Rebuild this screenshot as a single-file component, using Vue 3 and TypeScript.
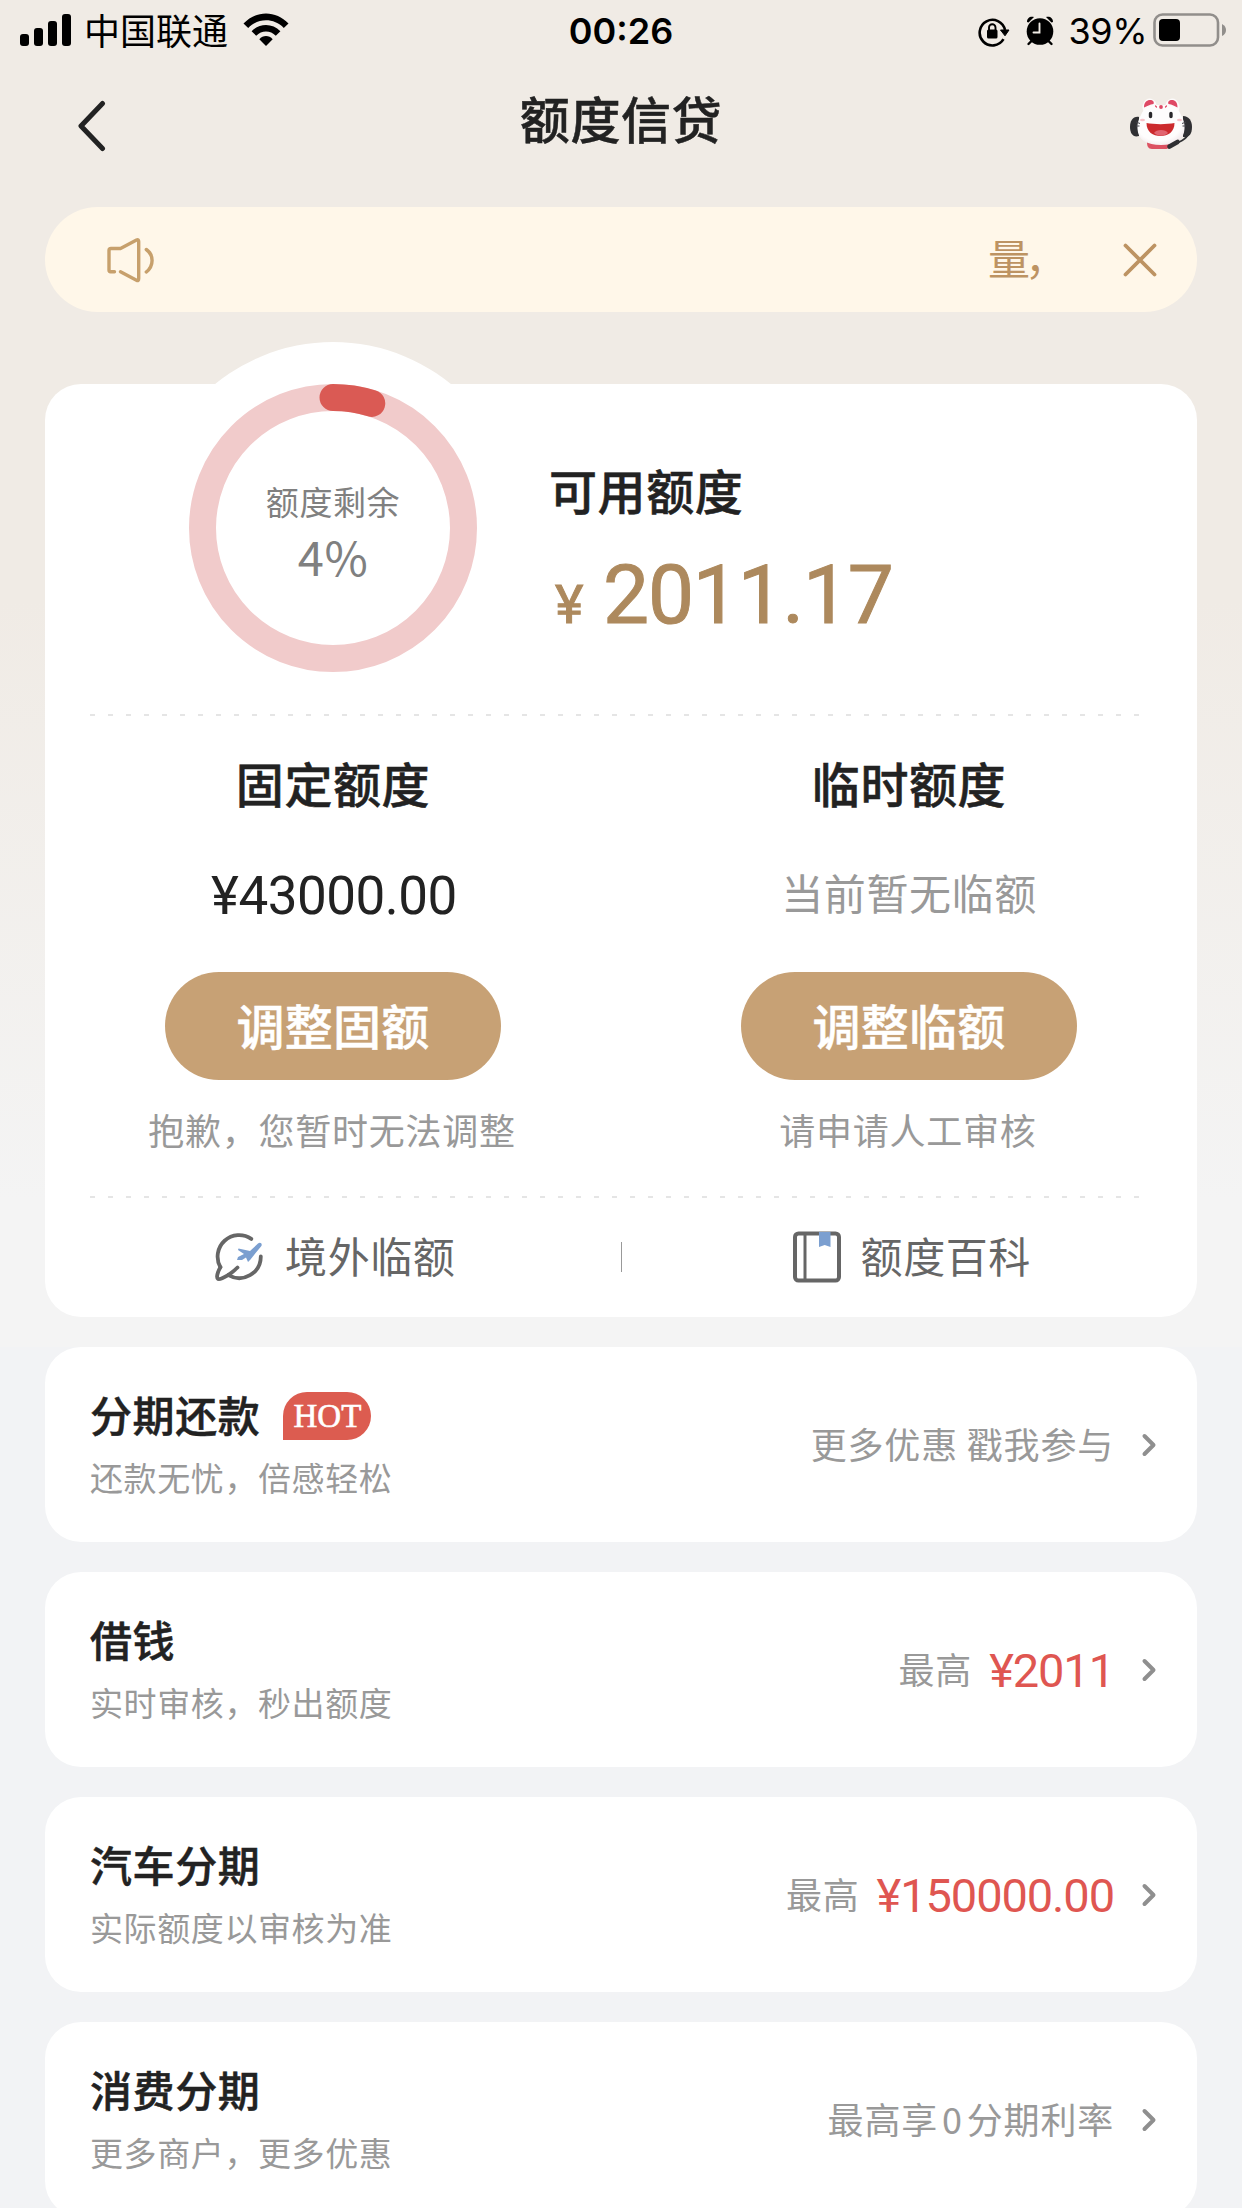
<script setup lang="ts">
interface QuotaColumn {
  title: string
  value: string
  isMoney: boolean
  action: string
  note: string
}

interface Product {
  title: string
  desc: string
  hot?: boolean
  hint: string[]
  amount?: string
}

const remainPercent = 4.8
const ringRadius = 130.5
const ringLength = 2 * Math.PI * ringRadius
const ringDash = `${(ringLength * remainPercent) / 100} ${ringLength}`

const columns: QuotaColumn[] = [
  { title: '固定额度', value: '¥43000.00', isMoney: true, action: '调整固额', note: '抱歉，您暂时无法调整' },
  { title: '临时额度', value: '当前暂无临额', isMoney: false, action: '调整临额', note: '请申请人工审核' },
]

// The middle part of a three-part hint is a figure, set with air on both sides.
const products: Product[] = [
  { title: '分期还款', desc: '还款无忧，倍感轻松', hot: true, hint: ['更多优惠 戳我参与'] },
  { title: '借钱', desc: '实时审核，秒出额度', hint: ['最高'], amount: '¥2011' },
  { title: '汽车分期', desc: '实际额度以审核为准', hint: ['最高'], amount: '¥150000.00' },
  { title: '消费分期', desc: '更多商户，更多优惠', hint: ['最高享', '0', '分期利率'] },
]
</script>

<template>
  <div class="page" lang="zh-CN">
    <header class="status">
      <div class="status-left">
        <svg class="signal" width="51" height="32" viewBox="0 0 51 32">
          <rect x="0" y="20" width="9" height="12" rx="3" />
          <rect x="14" y="14" width="9" height="18" rx="3" />
          <rect x="28" y="7" width="9" height="25" rx="3" />
          <rect x="42" y="0" width="9" height="32" rx="3" />
        </svg>
        <span class="carrier">中国联通</span>
        <svg class="wifi" width="46" height="34" viewBox="0 0 46 34">
          <path d="M0.5 10.5C13 -3 33 -3 45.5 10.5L40.8 15C31 4.800 15 4.800 5.200 15Z" />
          <path d="M8.600 18.300C16.500 9.800 29.500 9.800 37.400 18.300L32.800 22.800C27.500 17 18.500 17 13.200 22.800Z" />
          <path d="M16.300 26.300C20 22 26 22 29.700 26.300L23 33Z" />
        </svg>
      </div>
      <span class="clock">00:26</span>
      <div class="status-right">
        <svg class="lock" width="32" height="30" viewBox="0 0 32 30">
          <path d="M25.500 22.200A12.800 12.800 0 1 1 27 13" fill="none" stroke="#000" stroke-width="2.600" />
          <path d="M22.500 13H31L27 18.800Z" stroke="#000" stroke-linejoin="round" />
          <rect x="9" y="12.500" width="10.500" height="9" rx="1.500" />
          <path d="M11 13V10.500A3.250 3.250 0 0 1 17.500 10.500V13" fill="none" stroke="#000" stroke-width="1.900" />
        </svg>
        <svg class="alarm" width="28" height="30" viewBox="0 0 28 30">
          <circle cx="14" cy="15.500" r="13.300" />
          <path d="M1 6C1 2 4 0 8 1L2.500 6.500ZM27 6C27 2 24 0 20 1L25.500 6.500Z" />
          <path d="M2.500 28L6 24.500M25.500 28L22 24.500" stroke="#000" stroke-width="2.400" stroke-linecap="round" />
          <path d="M13.500 7.500V16.500H7.500" fill="none" stroke="#f0ebe5" stroke-width="1.900" stroke-linecap="round" />
        </svg>
        <span class="battery-text">39%</span>
        <svg class="battery" width="74" height="34" viewBox="0 0 74 34">
          <rect x="1.500" y="1.500" width="63.500" height="31" rx="8" fill="none" stroke="#918e8b" stroke-width="2.600" />
          <rect x="6" y="6" width="21" height="22" rx="4" />
          <path d="M69 11Q73 13 73 17T69 23Z" fill="#918e8b" />
        </svg>
      </div>
    </header>

    <nav class="nav">
      <svg class="back" width="30" height="52" viewBox="0 0 30 52">
        <path d="M25.500 3.500L4 26L25.500 48.500" fill="none" stroke="#222" stroke-width="5" stroke-linecap="round" stroke-linejoin="round" />
      </svg>
      <h1 class="nav-title">额度信贷</h1>
      <svg class="mascot" width="64" height="52" viewBox="0 0 64 52">
        <defs>
          <radialGradient id="face" cx="0.45" cy="0.4" r="0.7">
            <stop offset="0.7" stop-color="#fefdfd" />
            <stop offset="1" stop-color="#eee2e5" />
          </radialGradient>
        </defs>
        <path d="M10 19C4 18 1 23 1 29C1 35 4 40 10 38Z" fill="#303033" />
        <path d="M54 18C60 18 63 23 63 29C63 36 60 40 54 39Z" fill="#303033" />
        <path d="M18 44H42C42 49 40 51 36 51H23C19 51 18 48 18 44Z" fill="#dc5262" />
        <ellipse cx="20.500" cy="8.500" rx="7" ry="8" transform="rotate(12 20.500 8.500)" fill="#fdfafa" />
        <ellipse cx="43.500" cy="8.500" rx="7" ry="8" transform="rotate(-12 43.500 8.500)" fill="#fdfafa" />
        <path d="M32 7C42 7 49 9 52 17C55 22 56 27 55.500 31C55 42 46 47 32 47C18 47 9 42 8.500 31C8 27 9 22 12 17C15 9 22 7 32 7Z" fill="url(#face)" />
        <path d="M15 9.500C15 4 18 2 21 2C24 2 25.500 4 24.500 6C21 6.500 18 8 15 9.500ZM48.500 9.500C48.500 4 46 2 43 2C40 2 38.500 4 39.500 6C43 6.500 46 8 48.500 9.500Z" fill="#df4965" />
        <circle cx="32" cy="9" r="1.900" fill="#df4965" />
        <path d="M26.500 8L27.500 9M37.500 8L36.500 9" stroke="#df4965" stroke-width="1.200" stroke-linecap="round" />
        <path d="M21.500 15.500V18.500M42 15.500V18.500" stroke="#29282b" stroke-width="3.400" stroke-linecap="round" />
        <path d="M17.500 25C25 26.500 38 26.500 45.500 25C45.500 34 39 38 31.500 38C24 38 17.500 34 17.500 25Z" fill="#cc2a2d" />
        <path d="M25 35C27 31 37 31 39 35C35 38.500 29 38.500 25 35Z" fill="#e16470" />
        <ellipse cx="13.500" cy="22" rx="2.500" ry="1.200" fill="#f7c3c9" />
        <ellipse cx="50.500" cy="22" rx="2.500" ry="1.200" fill="#f7c3c9" />
        <path d="M7 24L11 25.500M7 28H10.500M57 24L53 25.500M57 28H53.500" stroke="#44434a" stroke-width="1" />
        <path d="M59 37C56 42 52 43 48 45" fill="none" stroke="#303033" stroke-width="1.500" />
        <path d="M40.500 48.500L48.500 44" stroke="#303033" stroke-width="4.600" stroke-linecap="round" />
      </svg>
    </nav>

    <section class="notice">
      <svg class="speaker" width="48" height="46" viewBox="0 0 48 46" fill="none" stroke="#c7a06c" stroke-width="3.400" stroke-linecap="round" stroke-linejoin="round">
        <path d="M7.500 34.700H3.500Q2 34.700 2 33V13.500Q2 11.500 4 11.500H13.500L29.500 3Q31.700 2 31.700 4.500V41.500Q31.700 44.500 29.500 43.300L13.500 34.700" />
        <path d="M39.300 12.500C47 18 47 28.500 39.300 35" />
      </svg>
      <div class="marquee"><span>量</span>，</div>
      <svg class="close" width="34" height="34" viewBox="0 0 34 34">
        <path d="M2.500 2.500L31.500 31.500M31.500 2.500L2.500 31.500" stroke="#bd9362" stroke-width="3.800" stroke-linecap="round" />
      </svg>
    </section>

    <section class="quota">
      <div class="overview">
        <div class="ring">
          <svg class="ring-svg" width="288" height="288" viewBox="0 0 288 288" fill="none" stroke-width="27">
            <circle cx="144" cy="144" :r="ringRadius" stroke="#f1cbcb" />
            <circle cx="144" cy="144" :r="ringRadius" stroke="#da5a54" stroke-linecap="round" :stroke-dasharray="ringDash" transform="rotate(-90 144 144)" />
          </svg>
          <div class="ring-text">
            <span class="ring-label">额度剩余</span>
            <span class="ring-value">4%</span>
          </div>
        </div>
        <div class="available">
          <h2 class="heading">可用额度</h2>
          <div class="balance"><span class="yen">¥</span><span class="sum">2011.17</span></div>
        </div>
      </div>

      <div class="dashes"></div>

      <div class="columns">
        <div v-for="c in columns" :key="c.title" class="column">
          <h2 class="heading">{{ c.title }}</h2>
          <div :class="c.isMoney ? 'money' : 'empty'">{{ c.value }}</div>
          <button class="action">{{ c.action }}</button>
          <div class="note">{{ c.note }}</div>
        </div>
      </div>

      <div class="dashes"></div>

      <div class="links">
        <div class="link">
          <svg width="50" height="50" viewBox="0 0 50 50" fill="none" stroke="#666" stroke-width="3.800" stroke-linecap="round">
            <path d="M36.300 6.900A21.500 21.500 0 0 0 5.400 35.200" />
            <path d="M45.800 24.500A21.500 21.500 0 0 1 13.500 43.100" />
            <path d="M5.400 35.200C2.500 40 1 46 3 47C7 48 17 41 22.500 35.500" />
            <path d="M23.500 16.500L35 19L43 11.500C45.500 9.500 48 12 46 14.500L41 20.500L35.500 27.500L33 30L31 25.500L27 28L22 28L23 25L29 22L23 18Z" fill="#7b9fd0" stroke="none" />
          </svg>
          <span>境外临额</span>
        </div>
        <i class="bar"></i>
        <div class="link">
          <svg width="48" height="52" viewBox="0 0 48 52" fill="none">
            <rect x="2" y="2.500" width="44" height="47" rx="3.500" stroke="#666" stroke-width="4" />
            <path d="M12 2.500V49" stroke="#666" stroke-width="3" />
            <path d="M26 1H37.500V16L31.700 14L26 16Z" fill="#7b9fd0" />
          </svg>
          <span>额度百科</span>
        </div>
      </div>
    </section>

    <main class="list">
      <article v-for="p in products" :key="p.title" class="item">
        <div class="item-main">
          <div class="item-title">
            <h3>{{ p.title }}</h3>
            <span v-if="p.hot" class="hot">HOT</span>
          </div>
          <p class="item-desc">{{ p.desc }}</p>
        </div>
        <span class="item-hint"><span v-for="(part, i) in p.hint" :key="i" :class="{ figure: i === 1 }">{{ part }}</span></span>
        <span v-if="p.amount" class="item-amount">{{ p.amount }}</span>
        <svg class="chevron" width="16" height="24" viewBox="0 0 16 24">
          <path d="M3.500 3L12.500 12L3.500 21" fill="none" stroke="#8f8f8f" stroke-width="4" stroke-linecap="round" stroke-linejoin="round" />
        </svg>
      </article>
    </main>
  </div>
</template>

<style>
body {
  margin: 0;
}
</style>

<style scoped>
.page {
  width: 1242px;
  height: 2208px;
  overflow: hidden;
  box-sizing: border-box;
  background: linear-gradient(#f0ebe5 0, #f0ebe5 600px, #f4f4f4 1200px, #f4f4f4 1347px, #f2f3f5 1347px);
  font-family: "Noto Sans CJK SC", sans-serif;
  color: #222;
  letter-spacing: 0.6px;
}
h1, h2, h3, p {
  margin: 0;
  font-weight: 500;
}
h1, h2, h3, .action {
  -webkit-text-stroke: 0.5px currentColor;
}
svg {
  display: block;
  flex: none;
}
.status {
  display: grid;
  grid-template-columns: 1fr auto 1fr;
  align-items: center;
  height: 60px;
  padding: 0 15px 0 20px;
  color: #000;
}
.status-left, .status-right {
  display: flex;
  align-items: center;
}
.status-right {
  justify-content: flex-end;
}
.carrier {
  margin: -2px 15px 0 13px;
  font-size: 36px;
  line-height: 56px;
  letter-spacing: 0;
}
.clock {
  font: 600 36px/56px Inter, sans-serif;
  letter-spacing: 0;
  padding: 2px 5px 0 0;
}
.lock {
  margin: 3px 16px 0 0;
}
.alarm {
  margin: 1px 15px 0 0;
}
.battery-text {
  font: 400 36px/56px Inter, sans-serif;
  letter-spacing: -0.5px;
  margin-right: 6px;
  padding-top: 2px;
}
.nav {
  display: grid;
  grid-template-columns: 1fr auto 1fr;
  align-items: center;
  height: 114px;
  padding: 0 49px 0 77px;
}
.back {
  margin-top: 18px;
}
.nav-title {
  font-size: 50px;
  line-height: 72px;
  padding-right: 28px;
}
.mascot {
  justify-self: end;
  margin-top: 14px;
}
.notice {
  display: flex;
  align-items: center;
  height: 105px;
  margin: 33px 45px 0;
  padding: 0 40px 0 62px;
  box-sizing: border-box;
  border-radius: 53px;
  background: #fff7e9;
}
.marquee {
  flex: 1;
  white-space: nowrap;
  margin: -5px 0 0 40px;
  padding-left: 793px;
  box-sizing: border-box;
  color: #bd9362;
  font-size: 42px;
  line-height: 60px;
}
.marquee span {
  letter-spacing: -5px;
}
.quota {
  height: 933px;
  margin: 72px 45px 0;
  border-radius: 36px;
  background: #fff;
}
.overview {
  display: flex;
  height: 330px;
}
.ring {
  display: grid;
  place-items: center;
  width: 372px;
  height: 372px;
  margin: -42px 0 0 102px;
  border-radius: 50%;
  background: #fff;
}
.ring-svg, .ring-text {
  grid-area: 1 / 1;
}
.ring-text {
  display: flex;
  flex-direction: column;
  align-items: center;
  padding-top: 8px;
  color: #808080;
}
.ring-label {
  font-size: 33px;
  line-height: 48px;
}
.ring-value {
  font-size: 47px;
  line-height: 62px;
}
.available {
  margin: 75px 0 0 30px;
}
.heading {
  font-size: 48px;
  line-height: 60px;
}
.balance {
  display: flex;
  align-items: baseline;
  margin-top: 28px;
  color: #ad895d;
  font-family: Roboto, sans-serif;
  font-weight: 400;
  line-height: 96px;
  -webkit-text-stroke: 1px currentColor;
}
.yen {
  width: 54px;
  padding-left: 6px;
  box-sizing: border-box;
  font-size: 54px;
}
.sum {
  font-size: 82px;
  letter-spacing: -1.2px;
}
.dashes {
  height: 2px;
  margin: 0 57px 0 45px;
  background: repeating-linear-gradient(90deg, #e5e5e5 0 5px, transparent 5px 18px);
}
.columns {
  display: grid;
  grid-template-columns: 1fr 1fr;
  height: 480px;
}
.column {
  display: flex;
  flex-direction: column;
  align-items: center;
  padding-top: 36px;
}
.money, .empty {
  height: 60px;
  margin-top: 54px;
}
.money {
  font: 400 53px/60px Roboto, sans-serif;
  letter-spacing: -0.5px;
  padding-left: 2px;
}
.empty {
  color: #999;
  font-size: 42px;
  line-height: 52px;
}
.action {
  width: 336px;
  height: 108px;
  margin-top: 46px;
  padding: 0 0 5px;
  border: 0;
  border-radius: 54px;
  background: #c7a175;
  color: #fff;
  font: 500 48px/60px "Noto Sans CJK SC", sans-serif;
  letter-spacing: 0.3px;
}
.note {
  margin-top: 25px;
  padding-right: 2px;
  color: #999;
  font-size: 36px;
  line-height: 48px;
  letter-spacing: 0.75px;
}
.links {
  display: flex;
  align-items: center;
  height: 118px;
}
.link {
  flex: 1;
  display: flex;
  align-items: center;
  justify-content: center;
  gap: 20px;
  padding-left: 5px;
  color: #666;
  font-size: 42px;
  line-height: 60px;
}
.link span {
  margin-top: -5px;
}
.bar {
  width: 1px;
  height: 30px;
  background: #999;
}
.list {
  display: flex;
  flex-direction: column;
  gap: 30px;
  margin: 30px 45px 0;
}
.item {
  display: flex;
  align-items: center;
  height: 195px;
  padding: 0 40px 0 45px;
  box-sizing: border-box;
  border-radius: 36px;
  background: #fff;
}
.item-main {
  flex: 1;
}
.item-title {
  display: flex;
  align-items: center;
  height: 60px;
}
.item-title h3 {
  font-size: 42px;
  line-height: 60px;
}
.hot {
  width: 88px;
  height: 48px;
  margin: 4px 0 0 23px;
  border-radius: 24px 24px 24px 0;
  background: #dc5c50;
  color: #fff;
  font: 400 33px/49px "Liberation Serif", serif;
  letter-spacing: 0;
  text-align: center;
  -webkit-text-stroke: 0.6px #fff;
}
.item-desc {
  margin: 9px 0 4px;
  color: #999;
  font-size: 33px;
  font-weight: 400;
  line-height: 48px;
}
.item-hint {
  margin-top: -4px;
  color: #999;
  font-size: 36px;
  line-height: 54px;
  letter-spacing: 0.8px;
}
.figure {
  margin: 0 4px;
}
.item-amount {
  margin: 2px 0 0 17px;
  color: #df5651;
  font: 400 47px/60px Roboto, sans-serif;
  letter-spacing: -1.1px;
}
.chevron {
  margin-left: 27px;
}
</style>
